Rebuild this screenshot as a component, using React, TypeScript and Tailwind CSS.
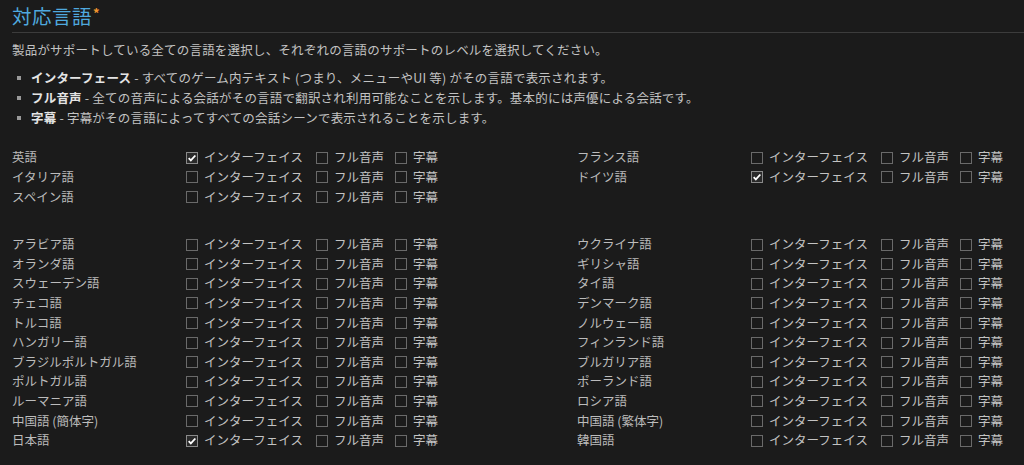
import React from 'react'

type Lang = { name: string; ui?: boolean }

const topLeft: Lang[] = [{ name: '英語', ui: true }, { name: 'イタリア語' }, { name: 'スペイン語' }]
const topRight: Lang[] = [{ name: 'フランス語' }, { name: 'ドイツ語', ui: true }]

const restLeft: Lang[] = [
  { name: 'アラビア語' },
  { name: 'オランダ語' },
  { name: 'スウェーデン語' },
  { name: 'チェコ語' },
  { name: 'トルコ語' },
  { name: 'ハンガリー語' },
  { name: 'ブラジルポルトガル語' },
  { name: 'ポルトガル語' },
  { name: 'ルーマニア語' },
  { name: '中国語 (簡体字)' },
  { name: '日本語', ui: true },
]

const restRight: Lang[] = [
  { name: 'ウクライナ語' },
  { name: 'ギリシャ語' },
  { name: 'タイ語' },
  { name: 'デンマーク語' },
  { name: 'ノルウェー語' },
  { name: 'フィンランド語' },
  { name: 'ブルガリア語' },
  { name: 'ポーランド語' },
  { name: 'ロシア語' },
  { name: '中国語 (繁体字)' },
  { name: '韓国語' },
]

function Box({ checked }: { checked?: boolean }) {
  return (
    <span
      className={`flex size-[12px] shrink-0 items-center justify-center border ${
        checked ? 'border-[#8a8a8a] bg-[#2a2a2a]' : 'border-[#6a6a6a] bg-[#1b1b1b]'
      }`}
    >
      {checked ? (
        <svg viewBox="0 0 12 12" className="size-[10px]">
          <path d="M2 6.2 L4.6 8.8 L10 3" fill="none" stroke="#ffffff" strokeWidth="2.2" />
        </svg>
      ) : null}
    </span>
  )
}

function Option({ label, checked, className }: { label: string; checked?: boolean; className?: string }) {
  return (
    <span className={`flex items-center gap-[6px] ${className ?? ''}`}>
      <Box checked={checked} />
      <span>{label}</span>
    </span>
  )
}

function LangRow({ lang }: { lang: Lang }) {
  return (
    <div className="flex h-[19.6px] items-center">
      <span className="w-[174px] shrink-0 text-[#bcbcbc]">{lang.name}</span>
      <Option label="インターフェイス" checked={lang.ui} className="w-[130px]" />
      <Option label="フル音声" className="w-[79px]" />
      <Option label="字幕" />
    </div>
  )
}

function LangColumns({ left, right }: { left: Lang[]; right: Lang[] }) {
  return (
    <div className="flex">
      <div className="w-[565px] shrink-0">
        {left.map((l) => (
          <LangRow key={l.name} lang={l} />
        ))}
      </div>
      <div className="flex-1">
        {right.map((l) => (
          <LangRow key={l.name} lang={l} />
        ))}
      </div>
    </div>
  )
}

export default function App() {
  return (
    <div
      className="h-[465px] w-[1024px] overflow-hidden bg-[#1b1b1b] pl-[12px] pt-[4px] text-[12.5px] text-[#c3c3c3]"
      style={{ fontFamily: '"Noto Sans CJK JP", "Noto Sans", sans-serif' }}
    >
      <h2 className="flex items-start text-[19.5px] tracking-[0.5px] leading-[24px] text-[#4fa9df]">
        対応言語
        <span className="ml-[1px] mt-[-3px] text-[13px] font-bold text-[#f0952e]">*</span>
      </h2>
      <div className="mt-[4px] h-px bg-[#3c3c3c]" />

      <p className="mt-[7px] leading-[20px] tracking-[0.2px]">
        製品がサポートしている全ての言語を選択し、それぞれの言語のサポートのレベルを選択してください。
      </p>

      <ul className="mt-[8px] leading-[20px] tracking-[0.2px]">
        <li className="flex items-center">
          <span className="ml-[5px] mr-[10px] size-[4px] bg-[#9a9a9a]" />
          <span>
            <b className="font-semibold text-[#e4e4e4]">インターフェース</b> - すべてのゲーム内テキスト (つまり、メニューやUI 等) がその言語で表示されます。
          </span>
        </li>
        <li className="flex items-center">
          <span className="ml-[5px] mr-[10px] size-[4px] bg-[#9a9a9a]" />
          <span>
            <b className="font-semibold text-[#e4e4e4]">フル音声</b> - 全ての音声による会話がその言語で翻訳され利用可能なことを示します。基本的には声優による会話です。
          </span>
        </li>
        <li className="flex items-center">
          <span className="ml-[5px] mr-[10px] size-[4px] bg-[#9a9a9a]" />
          <span>
            <b className="font-semibold text-[#e4e4e4]">字幕</b> - 字幕がその言語によってすべての会話シーンで表示されることを示します。
          </span>
        </li>
      </ul>

      <div className="mt-[20px]">
        <LangColumns left={topLeft} right={topRight} />
      </div>
      <div className="mt-[28px]">
        <LangColumns left={restLeft} right={restRight} />
      </div>
    </div>
  )
}
